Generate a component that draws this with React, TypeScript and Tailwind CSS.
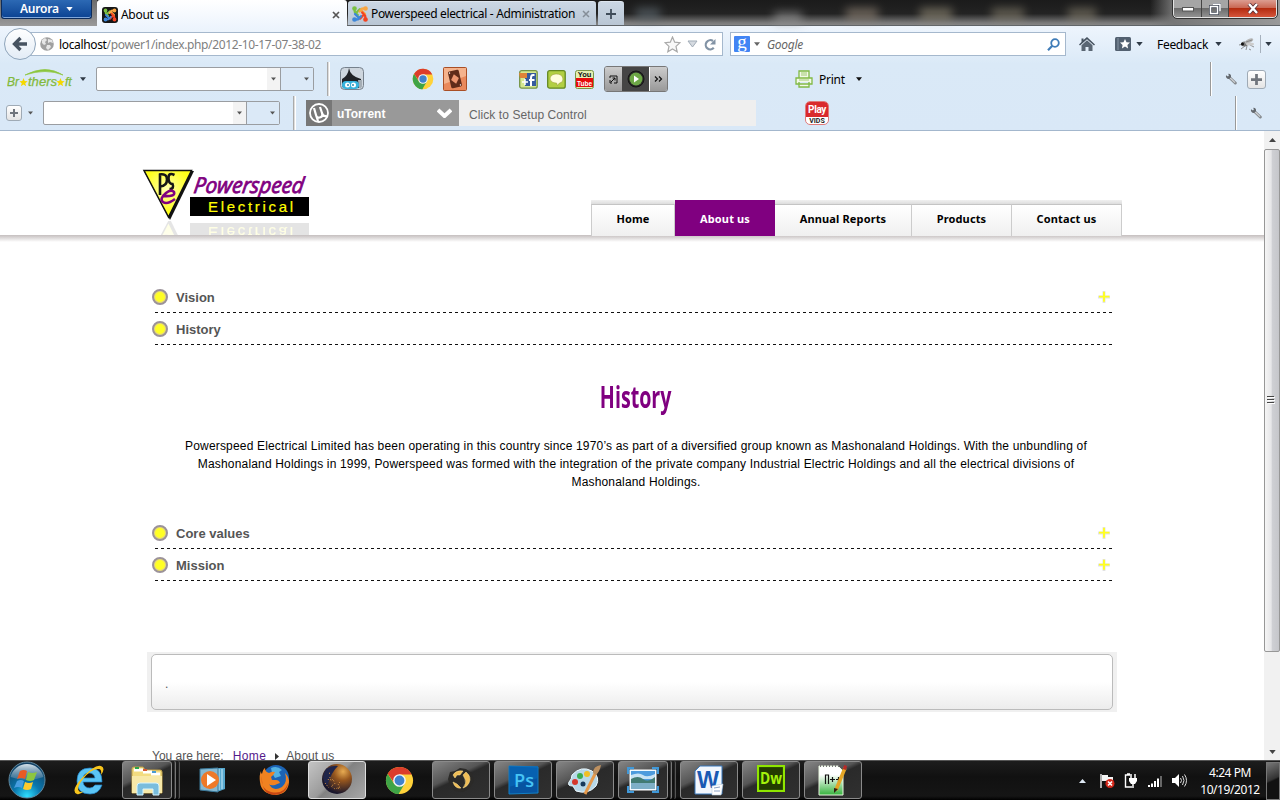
import React from "react";

type Kids = { children?: React.ReactNode };

function Svg({ w, h, vb, className = "", children }: { w: number; h: number; vb?: string; className?: string } & Kids) {
  return (
    <svg width={w} height={h} viewBox={vb ?? `0 0 ${w} ${h}`} className={`block shrink-0 ${className}`} fill="none">
      {children}
    </svg>
  );
}

function Down({ className = "", color = "#2f3a46", w = 7 }: { className?: string; color?: string; w?: number }) {
  return (
    <Svg w={w} h={4} vb="0 0 8 5" className={className}>
      <path d="M0 0h8L4 5z" fill={color} />
    </Svg>
  );
}

function Joomla({ dark = false }: { dark?: boolean }) {
  return (
    <Svg w={16} h={16}>
      {dark && <rect width="16" height="16" rx="3" fill="#161616" />}
      <g strokeWidth="2.300" strokeLinecap="round" transform={dark ? "translate(1.500 1.500) scale(.8125)" : ""}>
        <path d="M2.500 2.500L2.800 6l3 3M4.500 6.500L8 3.200" stroke="#7ac143" />
        <path d="M13.500 2.500L10 2.600 7.500 5.500M9 4l4 4" stroke="#f9a541" />
        <path d="M13.500 13.500l-.3-3.500-3-3.500M11.500 9L8 12.600" stroke="#f44321" />
        <path d="M2.500 13.500l3.500-.2 3-3M7 12L3 8" stroke="#3d86d8" />
        <circle cx="2.500" cy="2.500" r="1.200" fill="#7ac143" stroke="#7ac143" />
        <circle cx="13.500" cy="2.500" r="1.200" fill="#f9a541" stroke="#f9a541" />
        <circle cx="13.500" cy="13.500" r="1.200" fill="#f44321" stroke="#f44321" />
        <circle cx="2.500" cy="13.500" r="1.200" fill="#3d86d8" stroke="#3d86d8" />
      </g>
    </Svg>
  );
}

function Chrome({ size }: { size: number }) {
  return (
    <Svg w={size} h={size} vb="0 0 32 32">
      <circle cx="16" cy="16" r="15" fill="#ffd23a" />
      <path d="M3 8.500l7 11 6 3.500-1 8A15 15 0 0 1 3 8.500z" fill="#3fa447" />
      <path d="M22 19l-7 12-5-1 6-9z" fill="#3fa447" />
      <path d="M3 8.500l7 10 6-9h13.500A15 15 0 0 0 3 8.500z" fill="#dc3d2b" />
      <circle cx="16" cy="16" r="7" fill="#f4f6f8" />
      <circle cx="16" cy="16" r="5.400" fill="#3f82cc" />
    </Svg>
  );
}

function Wrench() {
  return (
    <Svg w={12} h={12}>
      <path d="M4.500 4.500l5.800 5.500" stroke="#85898d" strokeWidth="3" strokeLinecap="round" />
      <path d="M5 4.800l5 4.800" stroke="#d0d3d6" strokeWidth="1.200" />
      <path d="M1 2.200l2 1.300.8-.8L3.300.7Q6.500.5 6 4.200L4 6Q.3 5.500 1 2.200z" fill="#63686e" />
    </Svg>
  );
}

function PlusBox({ size }: { size: number }) {
  return (
    <div className="flex shrink-0 items-center justify-center rounded-[3px] border border-[#9faab5] bg-gradient-to-b from-white to-[#e4e4e4]" style={{ width: size, height: size }}>
      <Svg w={size - 8} h={size - 8} vb="0 0 12 12">
        <path d="M6 0v12M0 6h12" stroke="#70757c" strokeWidth="3" />
      </Svg>
    </div>
  );
}

function TabStrip() {
  return (
    <div className="relative flex h-[26px] border-b border-[#5f6468] bg-[linear-gradient(180deg,#1b1b1b_0,#232323_55%,#777_90%,#858585_100%)]">
      <div className="absolute left-[636px] top-2 h-3 w-6 bg-[#647078] opacity-60 blur-[5px]" />
      <div className="absolute left-[774px] top-3 h-3 w-7 bg-[#999] opacity-60 blur-[5px]" />
      <div className="absolute left-[846px] top-2 h-3 w-8 bg-[#9a8c7c] opacity-60 blur-[5px]" />
      <div className="absolute left-[920px] top-2 h-3 w-8 bg-[#9a927c] opacity-60 blur-[5px]" />
      <div className="absolute left-[992px] top-2 h-3 w-8 bg-[#9a927c] opacity-50 blur-[5px]" />
      <div className="absolute left-[1068px] top-2 h-3 w-7 bg-[#9a927c] opacity-50 blur-[5px]" />
      <div className="relative flex h-[26px] w-[97px] shrink-0 items-start bg-gradient-to-b from-[#6b6b6b] to-[#9a9a9a] pl-px">
        <div className="flex h-[19px] w-[91px] items-center gap-[7px] rounded-b-[3px] border border-t-0 border-[#0c2c5c] bg-gradient-to-b from-[#2c69b4] to-[#0a4292] pl-[18px] text-[12px] font-semibold text-white shadow-[inset_0_-1px_0_#7fa7dc]">
          <span className="mt-[-1px] tracking-[-0.2px]">Aurora</span>
          <Down color="#fff" />
        </div>
      </div>
      <div className="relative flex h-[26px] w-[250px] shrink-0 items-center rounded-t-[3px] bg-gradient-to-b from-white to-[#eef5fd] pl-[5px] pr-[7px] pt-[3px]">
        <Joomla dark />
        <span className="ml-[3px] text-[12px] tracking-[-0.3px]">About us</span>
        <Svg w={8} h={8} className="ml-auto"><path d="M1 1l6 6M7 1L1 7" stroke="#555" strokeWidth="1.700" /></Svg>
      </div>
      <div className="relative ml-px flex h-[24px] w-[248px] shrink-0 items-center self-start rounded-t-[3px] border-t border-[#dde5ee] bg-gradient-to-b from-[#cbd7e4] to-[#b9c6d4] pl-[4px] pr-[6px] pt-px mt-px">
        <Joomla />
        <span className="ml-[3px] whitespace-nowrap text-[12px] tracking-[-0.33px]">Powerspeed electrical - Administration</span>
        <Svg w={8} h={8} className="ml-auto"><path d="M1 1l6 6M7 1L1 7" stroke="#858e98" strokeWidth="1.500" /></Svg>
      </div>
      <div className="relative ml-[2px] mt-px flex h-[24px] w-[26px] items-center justify-center rounded-t-[3px] border-t border-[#dde5ee] bg-gradient-to-b from-[#cbd7e4] to-[#b9c6d4]">
        <Svg w={10} h={10}><path d="M5 0v10M0 5h10" stroke="#3f4c59" strokeWidth="1.800" /></Svg>
      </div>
      <div className="absolute right-0 top-0 h-[25px] w-[130px] bg-[linear-gradient(90deg,transparent,#777_25px,#999)]" />
      <div className="relative ml-auto mr-[3px] flex h-[18px] w-[104px] overflow-hidden rounded-b-[4px] border border-t-0 border-[#e3e3e3] outline outline-1 outline-[#333]">
        <div className="flex w-[28px] items-center justify-center border-r border-[#444] bg-[linear-gradient(180deg,#a5a5a5_50%,#6b6b6b_50%,#929292)] pt-[2px]">
          <Svg w={12} h={5}><rect x=".5" y=".5" width="11" height="3.500" fill="#fff" stroke="#555" /></Svg>
        </div>
        <div className="flex w-[27px] items-center justify-center border-r border-[#444] bg-[linear-gradient(180deg,#a5a5a5_50%,#6b6b6b_50%,#929292)]">
          <Svg w={12} h={12}>
            <path d="M4 1.200h7v7M1.500 3.500h7v7h-7z" stroke="#444b58" strokeWidth="3" />
            <path d="M4 1.200h7v7M1.500 3.500h7v7h-7z" stroke="#fff" strokeWidth="1.500" />
          </Svg>
        </div>
        <div className="flex flex-1 items-center justify-center bg-[linear-gradient(180deg,#dc9d91_0,#c96450_48%,#b42b10_50%,#d5553b_100%)]">
          <Svg w={12} h={11}>
            <path d="M2 1l8 9M10 1l-8 9" stroke="#5b3037" strokeWidth="4" />
            <path d="M2 1l8 9M10 1l-8 9" stroke="#fff" strokeWidth="2.400" />
          </Svg>
        </div>
      </div>
    </div>
  );
}

function NavBar() {
  return (
    <div className="flex h-[36px] items-center pl-[4px]">
      <div className="z-10 flex h-[32px] w-[32px] shrink-0 items-center justify-center rounded-full border border-[#8fa5bb] bg-gradient-to-b from-white to-[#e3ecf6]">
        <Svg w={16} h={16}><path d="M15 8H3M8.500 2L2.500 8l6 6" stroke="#475361" strokeWidth="3.300" /></Svg>
      </div>
      <div className="ml-[-6px] flex h-[24px] w-[693px] shrink-0 items-center border border-[#a5b8cd] bg-white pl-[9px] pr-[5px]">
        <Svg w={14} h={14}>
          <circle cx="7" cy="7" r="6.800" fill="#a0a0a0" />
          <path d="M2 3l3-2 2 2-2 2 1 2-2 1-2-2zM8 2l4 1 1 3-3-1-2 1zM7 8l3 0 1 2-3 3-2-2z" fill="#e6e6e6" />
        </Svg>
        <span className="ml-[5px] pt-px text-[12px] tracking-[-0.35px] text-[#808080]"><span className="text-black">localhost</span>/power1/index.php/2012-10-17-07-38-02</span>
        <Svg w={17} h={17} className="ml-auto"><path d="M8.500 1l2.200 5.200 5.300.5-4 3.700 1.200 5.400-4.700-2.900-4.700 2.900L5 10.400 1 6.700l5.300-.5z" fill="#f8f8f8" stroke="#a9a9a9" strokeWidth="1.200" /></Svg>
        <Svg w={11} h={8} className="ml-[6px]"><path d="M1 1h9L5.500 7z" fill="#d5dae0" stroke="#a1acb7" /></Svg>
        <Svg w={13} h={13} className="ml-[6px]">
          <path d="M9.800 9.800A4.600 4.600 0 1 1 9 3" stroke="#8293a5" strokeWidth="2.200" />
          <path d="M11.500 1v5.500H6z" fill="#8293a5" />
        </Svg>
      </div>
      <div className="ml-[7px] flex h-[24px] w-[336px] shrink-0 items-center border border-[#a5b8cd] bg-white pl-[3px] pr-[5px]">
        <div className="flex h-4 w-4 items-center justify-center rounded-[1px] bg-[#4285f4] text-white"><span className="-mt-[6px] font-['Liberation_Serif',serif] text-[19px] leading-none">g</span></div>
        <Down className="ml-[4px]" w={6} color="#666" />
        <span className="ml-[7px] pt-px text-[12px] italic tracking-[-0.3px] text-[#666]">Google</span>
        <Svg w={13} h={13} className="ml-auto"><circle cx="8" cy="5" r="3.800" stroke="#3f7cb8" strokeWidth="1.800" /><path d="M5.300 7.800L1 12.200" stroke="#3f7cb8" strokeWidth="2.200" /></Svg>
      </div>
      <Svg w={16} h={15} className="ml-[13px]"><path d="M8 0l8 7.500-1 1L8 2.200 1 8.500l-1-1L2.500 5V1.500h2V3z" fill="#46525f" /><path d="M2.500 8.200L8 3.300l5.500 4.900V14h-4v-4h-3v4h-4z" fill="#5a6673" /></Svg>
      <Svg w={16} h={14} className="ml-[20px]"><rect width="16" height="14" rx="1.500" fill="#526070" /><path d="M3 1v12" stroke="#8594a3" /><path d="M10 2l1.500 3.300 3.500.3-2.600 2.300.7 3.600-3.100-1.900-3.100 1.900.7-3.600L5 5.600l3.500-.3z" fill="#fff" /></Svg>
      <Down className="ml-[5px]" />
      <span className="ml-[14px] pt-px text-[12px] tracking-[-0.3px]">Feedback</span>
      <Down className="ml-[7px]" />
      <Svg w={18} h={14} className="ml-[16px]">
        <path d="M1 8l4-1M3 12l4-3M8 13l1-4M11 12l2 1M12 8l4 2" stroke="#777" strokeWidth=".8" />
        <ellipse cx="6.500" cy="7" rx="3.500" ry="2.500" fill="#777" /><circle cx="4.500" cy="7" r="1.500" fill="#111" />
        <ellipse cx="11" cy="4" rx="4.500" ry="2" transform="rotate(-25 11 4)" fill="#b5b5b5" /><ellipse cx="12" cy="7" rx="4" ry="1.500" fill="#ccc" /><path d="M8 5l6-2" stroke="#888" />
      </Svg>
      <div className="ml-[4px] h-[18px] w-px bg-[#a6b1bd]" />
      <Down className="ml-[4px]" />
    </div>
  );
}

function Combo({ wide }: { wide?: boolean }) {
  return (
    <div className={`flex h-[24px] shrink-0 rounded-[2px] border border-[#9a9da1] bg-white ${wide ? "w-[237px]" : "w-[218px]"}`}>
      <div className="flex flex-1 items-center justify-end">
        <div className="flex h-full w-[13px] items-center justify-center bg-[#f3f3f3]"><Down w={5} color="#555" /></div>
      </div>
      <div className="flex w-[33px] items-center justify-end border-l border-[#9a9da1] bg-[#dbe9f7] pr-[4px]"><Down w={5} color="#555" /></div>
    </div>
  );
}

function BrotherBar() {
  return (
    <div className="flex h-[34px] items-center">
      <Svg w={67} h={22} className="ml-[7px] mt-[2px]">
        <path d="M18 6Q39-5 56 6Q39-1 18 6" fill="#8cc63e" stroke="#8cc63e" strokeWidth=".7" />
        <g fontFamily="Liberation Sans, sans-serif" fontSize="12" fontStyle="italic" fill="#82b93c" stroke="#82b93c" strokeWidth=".25">
          <text x="0" y="17" textLength="12" lengthAdjust="spacingAndGlyphs">Br</text><text x="21" y="17" textLength="29" lengthAdjust="spacingAndGlyphs">thers</text><text x="58" y="17">ft</text>
        </g>
        <path d="M16.500 9l1.200 3 3 .2-2.400 2 .8 3-2.600-1.600-2.600 1.600.8-3-2.400-2 3-.2zM53.500 9l1.200 3 3 .2-2.400 2 .8 3-2.600-1.600-2.600 1.600.8-3-2.400-2 3-.2z" fill="#f5d800" />
      </Svg>
      <Down className="ml-[6px]" w={6} />
      <div className="ml-[10px]"><Combo /></div>
      <div className="ml-[13px] h-[34px] w-[3px] border-x border-l-[#aaa] border-r-white bg-[#ddd]" />
      <Svg w={24} h={24} className="ml-[10px]">
        <rect x=".5" y=".5" width="23" height="22" rx="4" fill="#ced6de" stroke="#76818c" />
        <path d="M2 12Q8 9 9 1q1 8 12 11v6q0 3-3 3H5q-3 0-3-3z" fill="#202226" />
        <path d="M18 13h4v6q0 2-3 2z" fill="#a4adb5" />
        <rect x="2" y="14" width="17" height="8" rx="4" fill="#37b4de" /><circle cx="7.500" cy="18" r="2.500" fill="#fff" /><circle cx="13.500" cy="18" r="2.500" fill="#fff" /><circle cx="8" cy="18" r="1" fill="#278aae" /><circle cx="13" cy="18" r="1" fill="#278aae" />
      </Svg>
      <div className="ml-[48px]"><Chrome size={22} /></div>
      <Svg w={24} h={24} className="ml-[9px]">
        <rect x=".5" y=".5" width="23" height="23" rx="1" fill="#e9895c" stroke="#a94f26" /><path d="M1 1h22v8L1 17z" fill="#f5b38d" />
        <g transform="rotate(-13 12 12)"><rect x="6.500" y="3.500" width="11" height="17" rx="1.500" fill="#602b19" /><path d="M12 7l4 5-4 5-4-5z" fill="#ed9670" /><circle cx="8" cy="5" r=".7" fill="#fff" /><circle cx="16" cy="19" r=".7" fill="#fff" /></g>
      </Svg>
      <Svg w={19} h={19} className="ml-[52px]"><rect x=".7" y=".7" width="17.500" height="17.500" rx="2" fill="#d6e890" stroke="#749445" strokeWidth="1.300" /><rect x="6" y="3" width="11" height="13" fill="#365b9d" /><path d="M15.500 5H14q-2 0-2 3v8M10 10h5.500" stroke="#fff" strokeWidth="2" /><path d="M0 3h8v5H1z" fill="#df8337" /><path d="M6 9v6M3 12h6" stroke="#fff" strokeWidth="1.500" /></Svg>
      <Svg w={19} h={19} className="ml-[9px]"><rect x=".7" y=".7" width="17.500" height="17.500" rx="2" fill="#b2cf43" stroke="#638820" strokeWidth="1.300" /><path d="M9.500 4c8 0 8 8.500 3 9l-2 2.500-1-2.500C1 13 1 4 9.500 4" fill="#fffddd" stroke="#9b9c35" strokeWidth=".6" /></Svg>
      <Svg w={19} h={19} className="ml-[9px]">
        <rect x=".5" y=".5" width="18" height="18" rx="2" fill="#e4efb1" stroke="#799447" /><path d="M1 8h17v9H1z" fill="#e60b0b" />
        <g fontFamily="Liberation Sans, sans-serif" fontWeight="bold" textAnchor="middle"><text x="9.500" y="7" fontSize="7.500" fill="#111">You</text><text x="9.500" y="15.500" fontSize="8" textLength="15" lengthAdjust="spacingAndGlyphs" fill="#fff">Tube</text></g>
      </Svg>
      <div className="ml-[10px] flex h-[26px] w-[64px] overflow-hidden rounded-[3px] border border-[#777]">
        <div className="flex w-[17px] items-center justify-center bg-gradient-to-b from-[#ccc] to-[#999]"><Svg w={9} h={9}><path d="M1 3V1h7v7H5M1 5v3h2M2 7l4-4M3.500 3H6v2.500" stroke="#111" /></Svg></div>
        <div className="flex w-[27px] items-center justify-center bg-[#454545]"><Svg w={18} h={18}><circle cx="9" cy="9" r="8" fill="#252525" stroke="#161616" /><circle cx="9" cy="9" r="6.500" fill="#6da747" /><path d="M7 5.500l5 3.500-5 3.500z" fill="#fff" /></Svg></div>
        <div className="flex flex-1 items-center justify-center border-l border-white bg-gradient-to-b from-[#ccc] to-[#999]"><Svg w={9} h={6}><path d="M1 .5L3.500 3 1 5.500M5 .5L7.500 3 5 5.500" stroke="#111" strokeWidth="1.200" /></Svg></div>
      </div>
      <Svg w={18} h={18} className="ml-[127px]"><path d="M4 8V1h10v7M1 8h16v6H1zM4 12v5h10v-5" fill="#f2f9e8" stroke="#81b944" strokeWidth="1.300" /><path d="M6 3h6M6 5h6M6 14h6M4 10h10" stroke="#a1ca72" /></Svg>
      <span className="ml-[6px] pt-[2px] text-[12px] tracking-[-0.25px]">Print</span>
      <Down className="ml-[11px]" w={6} color="#111" />
      <div className="ml-auto h-[34px] w-[2px] border-l border-[#999] bg-white" />
      <div className="ml-[13px]"><Wrench /></div>
      <div className="ml-[10px] mr-[14px]"><PlusBox size={19} /></div>
    </div>
  );
}

function TorrentBar() {
  return (
    <div className="flex h-[34px] items-center">
      <div className="ml-[6px]"><PlusBox size={16} /></div>
      <Down className="ml-[6px]" w={5} color="#555" />
      <div className="ml-[10px]"><Combo wide /></div>
      <div className="ml-[13px] h-[34px] w-[3px] border-x border-l-[#aaa] border-r-white bg-[#ddd]" />
      <div className="ml-[10px] flex h-[26px] w-[450px] shrink-0 bg-[#efefef] font-['Liberation_Sans',Arial,sans-serif] text-[12px]">
        <div className="flex w-[26px] items-center justify-center bg-[#777]"><Svg w={20} h={20}><circle cx="10" cy="10" r="9" stroke="#fff" strokeWidth="1.800" /><path d="M5 5l2 7q1 4 5 2 2-1 1-4l-2-6M13 10q1 4 5 3M7 12l2 6" stroke="#fff" strokeWidth="2.200" /></Svg></div>
        <div className="flex w-[127px] items-center justify-between bg-[#999] pl-[5px] pr-[7px] font-bold text-white"><span className="pt-px">uTorrent</span><Svg w={15} h={10}><path d="M1 2l6.500 6L14 2" stroke="#fff" strokeWidth="4" /></Svg></div>
        <span className="pl-[10px] pt-[2px] leading-[26px] tracking-[0.08px] text-[#666]">Click to Setup Control</span>
      </div>
      <div className="ml-[49px] flex h-[24px] w-[24px] flex-col overflow-hidden rounded-[5px] border border-[#df7a7a] bg-white text-center font-['Roboto',sans-serif] font-bold">
        <div className="flex h-[15px] shrink-0 items-center justify-center bg-[#d92a2d] text-[10px] leading-none tracking-[-0.4px] text-white">Play</div>
        <div className="text-[7px] leading-[8px] text-[#222]">VIDS</div>
      </div>
      <div className="ml-auto h-[34px] w-[2px] border-l border-[#999] bg-white" />
      <div className="ml-[13px] mr-[18px]"><Wrench /></div>
    </div>
  );
}

function LogoMark() {
  return (
    <>
      <path d="M2 2h50L28 51z" fill="#111" />
      <path d="M2 1.500h47.500L26.500 48z" fill="url(#pse)" stroke="#111" strokeWidth="1.500" />
      <g stroke="#151515" strokeWidth="2.600">
        <path d="M18 5v21M17 5.500q8-1.500 8 5t-7 7" />
        <path d="M32.500 6q-6-3-6 3t4 6q2 5-3 5" />
      </g>
      <path d="M20 27q14 1 12-4-3-3-8 1-7 6-3 9 4 3 12-3" stroke="#800080" strokeWidth="2.600" />
      <rect x="48" y="28" width="119" height="19" fill="#000" />
      <text x="66" y="43" fontFamily="Liberation Sans, sans-serif" fontSize="15" textLength="85" fill="#ff0" stroke="#ff0" strokeWidth=".2">Electrical</text>
    </>
  );
}

function Logo() {
  return (
    <Svg w={170} h={67}>
      <defs>
        <radialGradient id="pse" cx=".48" cy=".4" r=".5"><stop offset="0" stopColor="#ffffb0" /><stop offset="1" stopColor="#ffff19" /></radialGradient>
        <clipPath id="mirror"><rect y="52" width="170" height="14" /></clipPath>
      </defs>
      <g transform="translate(51 24) skewX(-8)">
        <text fontFamily="Open Sans, sans-serif" fontSize="22" fontStyle="italic" textLength="110" lengthAdjust="spacingAndGlyphs" fill="#800080" stroke="#800080" strokeWidth=".8">Powerspeed</text>
      </g>
      <LogoMark />
      <g clipPath="url(#mirror)" opacity=".1"><g transform="matrix(1 0 0 -1 0 101)"><LogoMark /></g></g>
    </Svg>
  );
}

const menu = [
  { label: "Home", w: "w-[84px]" },
  { label: "About us", w: "w-[100px]" },
  { label: "Annual Reports", w: "w-[137px]" },
  { label: "Products", w: "w-[100px]" },
  { label: "Contact us", w: "w-[110px]" },
];

function SiteHeader() {
  return (
    <div className="h-[112px] shrink-0">
      <div className="flex h-[105px] justify-between pl-[142px] pr-[142px]">
        <div className="pt-[38px]"><Logo /></div>
        <nav className="z-10 mt-[69px] flex h-[37px] text-[11px] font-bold tracking-[0.14px]">
          {menu.map((m, i) =>
            i === 1 ? (
              <div key={m.label} className={`${m.w} h-[36px] bg-[#800080] pt-px text-center leading-[36px] text-white`}>{m.label}</div>
            ) : (
              <div key={m.label} className={`${m.w} h-[37px] bg-[linear-gradient(180deg,#f0f0f0,#ddd_4px,transparent_4px)]`}>
                <div className={`mt-[4px] h-[32px] border-t border-t-[#c4c4c4] border-r border-r-[#ccc] bg-gradient-to-b from-white to-[#f0f0f0] text-center leading-[28px] ${i === 0 ? "border-l border-l-[#ccc]" : ""}`}>{m.label}</div>
              </div>
            )
          )}
        </nav>
      </div>
      <div className="-mt-px h-[7px] bg-gradient-to-b from-[#c5bfbf] to-white" />
    </div>
  );
}

function AccordionRow({ title, open }: { title: string; open?: boolean }) {
  return (
    <div className="flex h-[32px] flex-col">
      <div className="flex h-[31px] items-center pr-[6px]">
        <div className="h-4 w-4 rounded-full border-2 border-[#9b9299] bg-[#ffff25] shadow-[inset_0_0_0_1px_#e3d18d]" />
        <span className="ml-[8px] pt-[2px] font-['Liberation_Sans',Arial,sans-serif] text-[13px] font-bold text-[#555]">{title}</span>
        {!open && (
          <Svg w={12} h={12} className="ml-auto"><path d="M6 1v10M1 6h10" stroke="#e2e2e2" strokeWidth="3" strokeLinecap="round" /><path d="M6 .7v10M1 5.600h10.500" stroke="#ffff20" strokeWidth="1.900" /></Svg>
        )}
      </div>
      <div className="ml-[3px] mr-[4px] h-px bg-[repeating-linear-gradient(90deg,#111_0,#111_3px,transparent_3px,transparent_6px)]" />
    </div>
  );
}

function Page() {
  return (
    <div className="flex h-[629px] bg-white">
      <div className="flex w-[1264px] flex-col overflow-hidden">
        <SiteHeader />
        <main className="ml-[152px] w-[964px] pt-[38px]">
          <AccordionRow title="Vision" />
          <AccordionRow title="History" open />
          <section className="flex h-[172px] w-[968px] flex-col items-center pt-[31px]">
            <h1 className="origin-center scale-x-[.655] font-['Open_Sans',sans-serif] text-[30px] font-bold leading-[42px] text-[#800080]">History</h1>
            <p className="mt-[19px] w-[968px] whitespace-nowrap text-center font-['Liberation_Sans',Arial,sans-serif] text-[12px] leading-[18px] tracking-[0.17px] text-black">
              Powerspeed Electrical Limited has been operating in this country since 1970’s as part of a diversified group known as Mashonaland Holdings. With the unbundling of<br />
              Mashonaland Holdings in 1999, Powerspeed was formed with the integration of the private company Industrial Electric Holdings and all the electrical divisions of<br />
              Mashonaland Holdings.
            </p>
          </section>
          <AccordionRow title="Core values" />
          <AccordionRow title="Mission" />
        </main>
        <div className="ml-[147px] mt-[71px] h-[60px] w-[970px] shrink-0 bg-[#f0f0f0] px-[4px] py-[2px]">
          <div className="h-[56px] rounded-[5px] border border-[#bbb] bg-[linear-gradient(180deg,#fff_50%,#ececec)] pl-[13px] pt-[20px] font-['Liberation_Sans',sans-serif] text-[12px] leading-[18px] text-[#555]">.</div>
        </div>
        <div className="ml-[152px] mt-[35px] flex items-center font-['Liberation_Sans',Arial,sans-serif] text-[12px] leading-[18px] text-[#555]">
          <span>You are here:</span>
          <span className="ml-[9px] text-[#551a8b] underline tracking-[0.4px]">Home</span>
          <Svg w={4} h={7} className="ml-[9px]"><path d="M0 0l4 3.500L0 7z" fill="#333" /></Svg>
          <span className="ml-[7px] tracking-[0.1px]">About us</span>
        </div>
      </div>
      <div className="flex w-[16px] flex-col bg-[#f1f1f1]">
        <div className="flex h-[18px] items-center justify-center"><Svg w={7} h={4}><path d="M0 4h7L3.500 0z" fill="#444" /></Svg></div>
        <div className="flex h-[503px] items-center justify-center rounded-[2px] border border-[#979797] bg-[linear-gradient(90deg,#f5f5f5,#e6e6e8_45%,#cfd0d4_50%,#c5c6ca)] pr-[2px]">
          <Svg w={8} h={9}><path d="M0 .5h7M0 3.500h7M0 6.500h7" stroke="#444" /><path d="M1 1.500h7M1 4.500h7M1 7.500h7" stroke="#fff" /></Svg>
        </div>
        <div className="mt-auto flex h-[17px] items-center justify-center"><Down color="#444" /></div>
      </div>
    </div>
  );
}

function Flag() {
  return (
    <Svg w={40} h={38}>
      <defs>
        <radialGradient id="orb" cx=".5" cy=".95" r=".95"><stop offset="0" stopColor="#2ee0ff" /><stop offset=".4" stopColor="#0a77ae" /><stop offset="1" stopColor="#123b5c" /></radialGradient>
        <linearGradient id="gloss" x2="0" y2="1"><stop stopColor="#d5e2ea" /><stop offset="1" stopColor="#5984a3" stopOpacity=".5" /></linearGradient>
      </defs>
      <circle cx="20" cy="19" r="18" fill="url(#orb)" stroke="#61889e" />
      <path d="M3.500 16a17 17 0 0 1 33 0q-16 6-33 0" fill="url(#gloss)" />
      <path d="M13 10q4-2 7 0l-2 8q-4-2-8 0z" fill="#e85a24" />
      <path d="M21 11q4 2 9 0l-3 8q-4 2-8 0z" fill="#8cc63f" />
      <path d="M10 20q4-2 7 0l-2 7q-4-2-8 0z" fill="#479de0" />
      <path d="M18 21q4 2 8 0l-2 7q-4 2-8 0z" fill="#ffcb2d" />
    </Svg>
  );
}

const icons: React.ReactNode[] = [
  <Svg w={32} h={32} key="ie"><path d="M29 18H10q1 6 7 6 3 0 5-3h7q-3 9-12 9Q4 30 4 17T17 4q12 0 12 14zM10 14h12q-1-5-6-5t-6 5" fill="#5bc5f5" stroke="#2384c8" strokeWidth=".7" /><path d="M4 30Q-3 27 9 14 22 0 28 2q5 2 0 9 1-7-3-6-7 0-15 10Q3 24 6 27q1 2 5 0-4 4-7 3z" fill="#f8c51c" /></Svg>,
  <Svg w={34} h={32} key="folder"><path d="M2 29V5q0-2 2-2h9l2 3h15q2 0 2 2v21z" fill="#f3dc80" stroke="#c0a048" /><path d="M4 6h9M13 8h9M21 10h9" stroke="#fff" strokeWidth="3" /><path d="M5 4h4" stroke="#2ba44b" strokeWidth="2" /><path d="M13 6h4" stroke="#d75932" strokeWidth="2" /><path d="M22 8h4" stroke="#4a9bd1" strokeWidth="2" /><path d="M2 12h30v17H2z" fill="#f8e9a8" /><path d="M7 31v-9q0-3 3-3h16q3 0 3 3v9h-6v-6H13v6z" fill="#79bddd" stroke="#d8f5ff" /></Svg>,
  <Svg w={28} h={28} key="wmp"><path d="M14 2h12v21l-8 3-6-1z" fill="#56a7cd" /><path d="M20 3v21M23 3v20" stroke="#c9edfc" /><path d="M1 3l18-1v24L1 24z" fill="#86b9d2" stroke="#3a7899" /><circle cx="11" cy="14" r="9" fill="#ee7928" /><path d="M8 8l9 6-9 6z" fill="#fff" /></Svg>,
  <Svg w={32} h={32} key="firefox"><circle cx="17" cy="14" r="13" fill="#1c63b5" /><path d="M12 4q6-3 11 2l-3 2 2 4-6 2-3-5z" fill="#53b1e2" /><path d="M2 7q0 3 1 3Q4 5 6 4q0 4 4 5 4-2 6-1-2 4-4 5l1 3h4q3 0 4 3-3 1-5 2-5 1-6-1 4 8 13 3 6-5 3-14 4 4 4 9-1 12-13 13Q2 30 1 18 0 11 2 7z" fill="#f08221" /><path d="M3 12q-2 13 9 16 13 3 17-9-1 11-14 12Q2 30 3 12z" fill="#c84713" /></Svg>,
  <Svg w={34} h={32} key="aurora"><defs><radialGradient id="glow" cx=".7" cy=".25" r=".75"><stop stopColor="#e7ab52" /><stop offset=".4" stopColor="#96561e" /><stop offset="1" stopColor="#19162c" /></radialGradient></defs><circle cx="17" cy="15" r="15" fill="url(#glow)" /><path d="M6 5q6-4 12-3-6 5-11 20-7-8-1-17" fill="#20254a" /><path d="M8 16l2-3 1 4 2-2 2 5-4 2 4 3 5-2-2-3 3-3M5 19l4 5M9 9l2 1M18 24l3 1" stroke="#e39a43" strokeDasharray="1 2" /></Svg>,
  <Chrome size={29} key="chrome" />,
  <Svg w={28} h={26} key="gimp"><path d="M3 5l5-1 5-3 6 1 6 4 2 8-4 7-7 4-8-1-5-5-2-7z" fill="#2b2a28" /><path d="M6 8q3-5 10-4l-3 4h-3l-2 3zM19 5q6 5 3 11-2 4-6 5 4-5 2-9l-2-4zM6 15l4 2 4 4q-6 1-8-6z" fill="#efbd56" stroke="#ffe394" strokeWidth=".5" /></Svg>,
  <Svg w={31} h={30} key="ps"><path d="M1 1l29 1v26L1 29z" fill="#0753a0" stroke="#137fc4" /><path d="M1 1h29v12L1 22z" fill="#096abb" opacity=".6" /><text x="6" y="22" fontFamily="Open Sans, sans-serif" fontSize="18" fontWeight="600" textLength="20" lengthAdjust="spacingAndGlyphs" fill="#45c4f5">Ps</text></Svg>,
  <Svg w={34} h={32} key="paint"><path d="M4 11Q13 1 24 7q9 6 4 15-8 9-20 5-2-3-3-5-6 0-4-4 3-3 3-7z" fill="#b7d8e8" stroke="#eefaff" /><circle cx="7" cy="18" r="3" fill="#d5382c" /><circle cx="12" cy="12" r="3" fill="#3aab50" /><circle cx="19" cy="10" r="3" fill="#f1bf24" /><circle cx="15" cy="20" r="2.500" fill="#17395b" /><path d="M28 8L17 30" stroke="#e69a4c" strokeWidth="3" /><path d="M25 9q0-7 8-8-1 6-5 10z" fill="#bd9060" /></Svg>,
  <Svg w={32} h={26} key="photo"><path d="M3 3h26v20H3z" fill="#e5f4ff" stroke="#fff" /><path d="M4 4h24v10H4z" fill="#4d9bdd" /><path d="M4 8q8-3 12 0t12-1v5H4z" fill="#c8e3f4" /><path d="M4 12q7-4 12 0t12-2v8H4z" fill="#427b72" /><path d="M4 16h24v6H4z" fill="#7eafc6" /><path d="M1 7V1h6M25 1h6v6M31 19v6h-6M7 25H1v-6" stroke="#4098d8" strokeWidth="2.600" /></Svg>,
  <Svg w={30} h={31} key="word"><path d="M6 1h22v28H1V6z" fill="#f2f7fd" stroke="#3979bd" /><text x="3" y="23" fontFamily="Liberation Sans, sans-serif" fontSize="24" fontWeight="bold" textLength="22" lengthAdjust="spacingAndGlyphs" fill="#195ab3">W</text><path d="M18 21l11-2-2 11H18z" fill="#fff" stroke="#bacddd" strokeWidth=".6" /><path d="M20 23l6-1M20 26h6" stroke="#8ba2c5" /></Svg>,
  <Svg w={28} h={27} key="dw" className="-mt-[3px]"><rect x="1" y="1" width="26" height="25" fill="#233c00" stroke="#8fe600" strokeWidth="2.200" /><text x="3" y="19" fontFamily="Open Sans, sans-serif" fontSize="16" fontWeight="700" textLength="22" lengthAdjust="spacingAndGlyphs" fill="#a5f20b">Dw</text></Svg>,
  <Svg w={30} h={32} key="npp"><defs><linearGradient id="page" x2="0" y2="1"><stop offset=".3" stopColor="#fff" /><stop offset="1" stopColor="#35b23c" /></linearGradient></defs><path d="M1 2h19l5 5v24H1z" fill="url(#page)" stroke="#e8f5df" /><path d="M2 2h19" stroke="#777" strokeWidth="2" strokeDasharray="1 2" /><path d="M7.500 20v-9h3v9M12 15.500h5M14.500 13v5M18 15.500h5M20.500 13v5" stroke="#111" strokeWidth="1.200" /><path d="M27 4L18 26" stroke="#e4a525" strokeWidth="3.500" /><path d="M16 24l4 1-4 4z" fill="#342010" /><path d="M25.500 3l3 1" stroke="#b72a2a" strokeWidth="4" /></Svg>,
];

const pinned = [0, 2, 3, 5];
const stacked = [1, 9];

function Taskbar() {
  return (
    <div className="flex h-[40px] border-t border-[#555] bg-[linear-gradient(180deg,#1d1d1d,#111_40%,#151515_90%,#000)] text-white">
      <div className="w-[60px] shrink-0 pl-[7px]"><Flag /></div>
      <div className="flex gap-[4px]">
        {icons.map((icon, i) =>
          pinned.includes(i) ? (
            <div key={i} className="flex h-[38px] w-[58px] items-center justify-center">{icon}</div>
          ) : (
            <div key={i} className="flex h-[38px] w-[58px] gap-[2px]">
              <div className={`flex flex-1 items-center justify-center rounded-[3px] border ${i === 4 ? "border-[#ddd] bg-[linear-gradient(135deg,#c4c4c4,#9b9b9b_45%,#828282_50%,#a8a8a8)]" : "border-[#8a8a8a] bg-[linear-gradient(155deg,#858585_0,#555_38%,#2a2a2a_46%,#303030_100%)]"}`}>{icon}</div>
              {stacked.includes(i) && <><div className="w-[2px] rounded-r border-r border-[#777] bg-[#333]" /><div className="w-[2px] rounded-r border-r border-[#555] bg-[#222]" /></>}
            </div>
          )
        )}
      </div>
      <div className="ml-auto flex items-center">
        <Svg w={7} h={4}><path d="M0 4h7L3.500 0z" fill="#dfe9f4" /></Svg>
        <Svg w={15} h={16} className="ml-[14px]"><path d="M1 1v14" stroke="#fff" strokeWidth="1.300" /><path d="M2 2h6v2h5v6H7V8H2z" fill="#f4f4f4" /><circle cx="10" cy="10.500" r="4.500" fill="#d3281b" /><path d="M8 8.500l4 4M12 8.500l-4 4" stroke="#fff" strokeWidth="1.600" /></Svg>
        <Svg w={14} h={16} className="ml-[9px]"><path d="M6 2H1.500v12H8M3 1h3" stroke="#fff" strokeWidth="1.400" /><path d="M7 1v4M11 1v4M9 10v5" stroke="#fff" strokeWidth="1.500" /><path d="M5 5h8v3l-2 3H7L5 8z" fill="#fff" /></Svg>
        <Svg w={14} h={12} className="ml-[10px]"><path d="M1 12v-2M4 12V8.500M7 12V6M10 12V3.500" stroke="#fff" strokeWidth="2" /><path d="M13 12V1" stroke="#666" strokeWidth="2" /></Svg>
        <Svg w={16} h={15} className="ml-[9px]"><path d="M1 5h3l4-4v13l-4-4H1z" fill="#fff" /><path d="M9.500 5q2 2.500 0 5M11.500 3q3 4.500 0 9M13.500 1.500q4 6 0 12" stroke="#ddd" /></Svg>
        <div className="ml-[13px] flex w-[60px] flex-col items-center text-[12px] leading-[17px] tracking-[-0.43px]"><span>4:24 PM</span><span className="whitespace-nowrap">10/19/2012</span></div>
        <div className="ml-[6px] h-[38px] w-[14px] border border-[#777] bg-[linear-gradient(155deg,#777,#333_45%,#111_50%)]" />
      </div>
    </div>
  );
}

export default function App() {
  return (
    <div className="h-[800px] w-[1280px] overflow-hidden bg-white font-['Noto_Sans','Open_Sans',sans-serif] text-black">
      <TabStrip />
      <div className="h-[105px] border-b border-[#a3b7cd] bg-[linear-gradient(180deg,#eef5fd,#dae9f7_38px,#d9e8f7)]">
        <NavBar />
        <BrotherBar />
        <TorrentBar />
      </div>
      <Page />
      <Taskbar />
    </div>
  );
}
